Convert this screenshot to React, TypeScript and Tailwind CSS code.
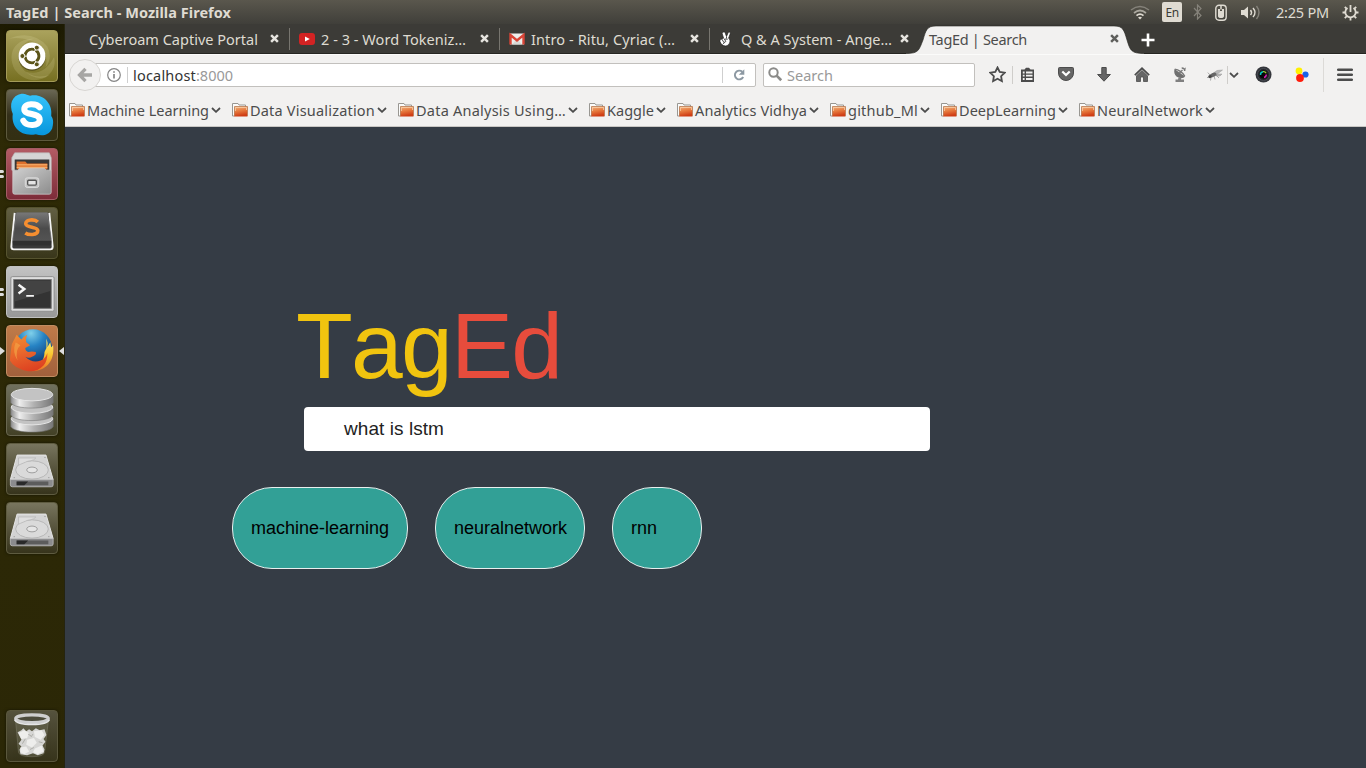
import { useLayoutEffect, useRef, useState, type ReactNode } from "react";

/* Text whose tracking is measured so that it fills `w` pixels. */
function Fit({ w, className = "", children }: { w: number; className?: string; children: string }) {
  const ref = useRef<HTMLSpanElement>(null);
  const [spacing, setSpacing] = useState(0);
  useLayoutEffect(() => {
    if (ref.current) {
      const natural = ref.current.getBoundingClientRect().width - spacing * children.length;
      setSpacing((w - natural) / children.length);
    }
  }, [w, children]);
  return (
    <span ref={ref} className={`inline-block shrink-0 whitespace-pre ${className}`} style={{ letterSpacing: `${spacing}px` }}>
      {children}
    </span>
  );
}

function Close({ dark = false }: { dark?: boolean }) {
  return (
    <svg width="9" height="9" viewBox="0 0 8 8" className="shrink-0">
      <path d="M1 1 7 7M7 1 1 7" stroke={dark ? "#5e5e5b" : "#e6e4df"} strokeWidth="2.2" />
    </svg>
  );
}

function Chevron() {
  return (
    <svg width="10" height="6" viewBox="0 0 10 6" className="shrink-0">
      <path d="M1 1 5 4.8 9 1" fill="none" stroke="#4c4c4c" strokeWidth="1.8" />
    </svg>
  );
}

function Folder() {
  return (
    <svg width="16" height="16" viewBox="0 0 16 16" className="shrink-0">
      <defs>
        <linearGradient id="folder" x1="0" y1="0" x2="0.25" y2="1">
          <stop offset="0" stopColor="#f3b683" />
          <stop offset="0.5" stopColor="#e77b3f" />
          <stop offset="1" stopColor="#cf3c14" />
        </linearGradient>
      </defs>
      <path d="M.5 14V1.5H6L7 3H13.5V5" fill="#fbfbfa" stroke="#999792" />
      <path d="M.5 14H2" stroke="#999792" />
      <path d="M2.5 4.5H15.5V14.5H2Z" fill="url(#folder)" />
      <path d="M2.5 14V4.5H15.5V14" fill="none" stroke="#b97b54" strokeWidth=".8" />
      <path d="M3.5 9V5.5H14.5V8" fill="none" stroke="#fbd5b1" strokeOpacity=".7" />
    </svg>
  );
}

function YouTube() {
  return (
    <svg width="16" height="16" viewBox="0 0 16 16">
      <rect y="2" width="16" height="12" rx="3" fill="#d32323" />
      <path d="M6 5.4 10.8 8 6 10.6Z" fill="#fff" />
    </svg>
  );
}

function Gmail() {
  return (
    <svg width="16" height="16" viewBox="0 0 16 16">
      <rect x="1" y="2.5" width="14" height="11" fill="#eeeeec" />
      <path d="M3 13.5 8 8 13 13.5Z" fill="#d9d9d6" />
      <path d="M1.5 13.5V4L8 9.5 14.5 4V13.5" fill="none" stroke="#d94436" strokeWidth="2.4" />
    </svg>
  );
}

function Victory() {
  return (
    <svg width="16" height="16" viewBox="0 0 16 16">
      <path
        d="M4 1.2C5.2.5 6.2 1.3 6.4 2.4L7.5 5.5 9 2C9.4.8 10.6.8 11.1 1.6 11.4 2.2 11.2 2.8 11 3.3L9.6 7.3C11 8.2 11.3 9.8 10.8 11.2 10.2 13.3 8.8 15 6.4 15 3.8 15 1.8 13 1 10.6.6 9.1 1.6 8.1 3 8.1L4.6 7.2 3.3 3C3 2.1 3.3 1.5 4 1.2Z"
        fill="#fff"
        stroke="#222"
        strokeWidth=".7"
      />
      <path d="M3 8.4 5 11.6 6.8 10.5 5.4 8 8.8 8.2M5 11.6 4.4 13M7.5 5.8V7.5" fill="none" stroke="#222" strokeWidth=".8" />
    </svg>
  );
}

const tabs: { text: string; w: number; icon?: ReactNode }[] = [
  { text: "Cyberoam Captive Portal", w: 169 },
  { text: "2 - 3 - Word Tokeniz…", w: 145, icon: <YouTube /> },
  { text: "Intro - Ritu, Cyriac (…", w: 144, icon: <Gmail /> },
  { text: "Q & A System - Ange…", w: 151, icon: <Victory /> },
];

function Tabs() {
  return (
    <div className="flex h-[30px] border-b border-[#262622] bg-[#3c3b37] pl-[15px] text-[#dfdbd2]">
      {tabs.map((t, i) => (
        <div key={t.text} className="flex h-full w-[210px] shrink-0 items-center">
          <div className="flex h-4 w-[190px] items-center gap-[6px] pl-[9px]">
            {t.icon}
            <Fit w={t.w}>{t.text}</Fit>
          </div>
          <Close />
          <div className="flex-1" />
          {i < 3 && <div className="h-[22px] w-px bg-[#77756f]" />}
        </div>
      ))}
      <div className="relative flex h-[30px] w-[221px] shrink-0 items-center pb-px text-[#4c4c4c]">
        <svg width="238" height="30" viewBox="0 0 238 30" className="absolute -left-[14px] top-0">
          <path d="M0 30V29.5C13 29.5 13 26 17 16 20 6 21 2 30 2H208C217 2 218 6 221 16 224 26 225 29.5 238 29.5V30Z" fill="#f2f1f0" />
          <path d="M0 29.5C13 29.5 13 26 17 16 20 6 21 2 30 2H208C217 2 218 6 221 16 224 26 225 29.5 238 29.5" fill="none" stroke="#262622" strokeWidth=".6" />
        </svg>
        <div className="relative flex items-center pl-[9px]">
          <div className="w-[181px]">
            <Fit w={98}>TagEd | Search</Fit>
          </div>
          <Close dark />
        </div>
      </div>
      <svg width="14" height="14" viewBox="0 0 14 14" className="mt-[9px]">
        <path d="M7 .5V13.5M.5 7H13.5" stroke="#fff" strokeWidth="2.6" />
      </svg>
    </div>
  );
}

function Slot({ w = "w-[38px]", children }: { w?: string; children: ReactNode }) {
  return <div className={`flex shrink-0 items-center justify-center ${w}`}>{children}</div>;
}

function Toolbar() {
  return (
    <div className="flex h-[40px] items-center border-t border-[#fbfbfa] pl-[4px] text-[#4c4c4c]">
      <div className="relative z-10 flex size-[32px] shrink-0 items-center justify-center rounded-full border border-[#d8d6d3] bg-[#f2f1f0]">
        <svg width="16" height="16" viewBox="0 0 16 16">
          <path d="M8.5 1.8 2.5 8 8.5 14.2M3 8H15" fill="none" stroke="#a7a6a4" strokeWidth="3.3" />
        </svg>
      </div>
      <div className="-ml-[8px] flex h-[24px] w-[663px] shrink-0 items-center rounded-[2px] border border-[#c2c0bd] bg-white pl-[13px]">
        <svg width="14" height="14" viewBox="0 0 14 14">
          <circle cx="7" cy="7" r="6.3" fill="none" stroke="#858585" strokeWidth="1.2" />
          <path d="M7 6V10.5M7 3.2V4.8" stroke="#858585" strokeWidth="1.7" />
        </svg>
        <div className="ml-[6px] mr-[5px] h-[16px] w-px bg-[#cfcfcf]" />
        <Fit w={63} className="text-[#333]">localhost</Fit>
        <Fit w={37} className="text-[#999]">:8000</Fit>
        <div className="flex-1" />
        <div className="h-[16px] w-px bg-[#cfcfcf]" />
        <svg width="12" height="12" viewBox="0 0 12 12" className="ml-[10px] mr-[10px]">
          <path d="M9.3 2.8A4.4 4.4 0 1 0 10.2 8" fill="none" stroke="#8c98a2" strokeWidth="1.9" />
          <path d="M11.3.3V5.8H5.8Z" fill="#8c98a2" />
        </svg>
      </div>
      <div className="ml-[7px] flex h-[24px] w-[212px] shrink-0 items-center rounded-[2px] border border-[#c2c0bd] bg-white pl-[4px] text-[#999]">
        <svg width="15" height="15" viewBox="0 0 15 15">
          <circle cx="5.5" cy="5.5" r="4.2" fill="none" stroke="#8b8b89" strokeWidth="2" />
          <path d="M8.6 8.6 13.2 13.2" stroke="#8b8b89" strokeWidth="2.7" />
        </svg>
        <Fit w={46} className="ml-[4px]">Search</Fit>
      </div>
      <Slot w="w-[44px]">
        <svg width="17" height="17" viewBox="0 0 17 17">
          <path d="M8.5 1.5 10.7 6 15.7 6.7 12.1 10.2 12.9 15.2 8.5 12.8 4.1 15.2 4.9 10.2 1.3 6.7 6.3 6Z" fill="none" stroke="#4c4c4c" strokeWidth="1.8" />
        </svg>
      </Slot>
      <div className="-ml-[7px] h-[18px] w-px bg-[#cfcdca]" />
      <Slot w="w-[30px]">
        <svg width="15" height="16" viewBox="0 0 15 16">
          <path d="M1 2.5H4.5L6 .8H9L10.5 2.5H14V15H1Z" fill="#4c4c4c" />
          <path d="M2.8 5.5H4.6M6 5.5H12.5M2.8 8.7H4.6M6 8.7H12.5M2.8 12H4.6M6 12H12.5" stroke="#f2f1f0" strokeWidth="1.8" />
        </svg>
      </Slot>
      <div className="-ml-[4px] flex">
        <Slot w="w-[54px]">
          <svg width="16" height="15" viewBox="0 0 16 15">
            <path d="M1.5.5H14.5Q15.5.5 15.5 1.5V6A7.5 7.5 0 0 1 .5 6V1.5Q.5.5 1.5.5Z" fill="#666" stroke="#4c4c4c" />
            <path d="M4.3 4.5 8 8 11.7 4.5" fill="none" stroke="#fff" strokeWidth="2.2" />
          </svg>
        </Slot>
        <Slot w="w-[22px]">
          <svg width="14" height="15" viewBox="0 0 14 15">
            <path d="M4.8.5H9.2V7.5H13.4L7 14.2.6 7.5H4.8Z" fill="#666" stroke="#4c4c4c" />
          </svg>
        </Slot>
        <Slot w="w-[54px]">
          <svg width="16" height="15" viewBox="0 0 16 15">
            <path d="M.8 8.2 8 1.3 15.2 8.2" fill="none" stroke="#4c4c4c" strokeWidth="1.7" />
            <path d="M2.5 8.7 8 3.5 13.5 8.7V14.5H9.5V10H6.5V14.5H2.5Z" fill="#666" stroke="#4c4c4c" strokeWidth=".8" />
          </svg>
        </Slot>
        <Slot w="w-[22px]">
          <svg width="14" height="16" viewBox="0 0 14 16">
            <path d="M1.5 2C.5 6.5 2.5 9.8 6.3 10.8 8.8 11.4 10.8 10.8 12 9.4Z" fill="#707070" />
            <path d="M1.8 2.2C5.5 2.5 10.5 6 11.8 9.3M6.3 6.2 9.5 3M8.7 1Q11.8 1 11.8 4" fill="none" stroke="#777" strokeWidth="1.3" />
            <path d="M11 1.2 13 .6 12.4 3Z" fill="#888" />
            <path d="M5.5 10.5 5 12.5H2.5V15H11V12.5H8L8.5 10.5" fill="#808080" />
          </svg>
        </Slot>
        <Slot w="w-[48px]">
          <svg width="16" height="12" viewBox="0 0 16 12">
            <path d="M5 5 10 1.5 15.5 1 9 6ZM9 5 15 5 13 7 9 7Z" fill="#b8b8b8" stroke="#999" strokeWidth=".5" />
            <ellipse cx="6" cy="6" rx="3.6" ry="2" transform="rotate(-25 6 6)" fill="#666" />
            <circle cx="3" cy="7.6" r="1.7" fill="#444" />
            <path d="M3 6 .8 3.6M4 8.5 3.5 11.5M7 7 8 10.5M9 6 12 9M0 8.5H2" fill="none" stroke="#888" strokeWidth=".7" />
          </svg>
        </Slot>
      </div>
      <div className="-ml-[12px] h-[18px] w-px bg-[#cfcdca]" />
      <Slot w="w-[13px]"><Chevron /></Slot>
      <Slot w="w-[47px]">
        <svg width="17" height="17" viewBox="0 0 17 17">
          <circle cx="8.5" cy="8.5" r="8" fill="#34363b" />
          <circle cx="8.5" cy="8.5" r="6" fill="#24252a" stroke="#494c53" />
          <circle cx="8.5" cy="8.5" r="4" fill="#080808" />
          <path d="M5.5 9A3 3 0 0 1 8 5.8" stroke="#00c9c0" strokeWidth="1.5" fill="none" />
          <path d="M8 5.6A3 3 0 0 1 11.2 7.3" stroke="#a5d236" strokeWidth="1.2" fill="none" />
          <path d="M11.3 8.5A3 3 0 0 1 9 11.4" stroke="#d921b5" strokeWidth="1.5" fill="none" />
        </svg>
      </Slot>
      <Slot w="w-[29px]">
        <svg width="14" height="15" viewBox="0 0 14 15">
          <circle cx="4" cy="4" r="3.4" fill="#fff000" />
          <circle cx="10.5" cy="7.5" r="3.1" fill="#1764e8" />
          <circle cx="5" cy="11" r="3.9" fill="#ff1c0c" />
        </svg>
      </Slot>
      <div className="ml-[7px] h-[34px] w-px bg-[#dcdad7]" />
      <Slot w="w-[42px]">
        <svg width="16" height="14" viewBox="0 0 16 14">
          <path d="M1.2 1.8H14.8M1.2 6.8H14.8M1.2 11.8H14.8" stroke="#4c4c4c" strokeWidth="2.5" strokeLinecap="round" />
        </svg>
      </Slot>
    </div>
  );
}

const bookmarks = [
  { text: "Machine Learning", w: 122, box: "w-[163px]" },
  { text: "Data Visualization", w: 125, box: "w-[166px]" },
  { text: "Data Analysis Using…", w: 150, box: "w-[191px]" },
  { text: "Kaggle", w: 47, box: "w-[88px]" },
  { text: "Analytics Vidhya", w: 112, box: "w-[153px]" },
  { text: "github_Ml", w: 70, box: "w-[111px]" },
  { text: "DeepLearning", w: 97, box: "w-[138px]" },
  { text: "NeuralNetwork", w: 106, box: "w-[148px]" },
];

function Bookmarks() {
  return (
    <div className="flex h-[33px] items-center border-b border-[#c9c7c4] pb-px pl-[4px] text-[#4c4c4c]">
      {bookmarks.map((b) => (
        <div key={b.text} className={`flex shrink-0 items-center gap-[2px] ${b.box}`}>
          <Folder />
          <Fit w={b.w}>{b.text}</Fit>
          <Chevron />
        </div>
      ))}
    </div>
  );
}

function Disk() {
  return (
    <svg viewBox="0 0 52 52" className="size-full">
      <path d="M10.5 11.5H40.5L48 37H3.5Z" fill="#d3d3d3" stroke="#e6e6e6" />
      <path d="M3.5 37H48V42.5Q48 44.5 46 44.5H5.5Q3.5 44.5 3.5 42.5Z" fill="#8b8b8d" stroke="#c4c4c4" strokeWidth=".8" />
      <path d="M10 39H43V43H10Z" fill="#5c5c5c" />
      <path d="M10 39H22L18 43H10Z" fill="#292929" />
      <ellipse cx="26" cy="27" rx="17" ry="9.5" fill="#dadada" stroke="#adadad" strokeWidth=".8" />
      <ellipse cx="26" cy="27" rx="5.5" ry="3" fill="#e5e5e5" stroke="#9b9b9b" />
      <path d="M12 14.5H30C28 18 22 17 19 19L12 22Z" fill="#dedede" stroke="#b7b7b7" strokeWidth=".8" />
      <path d="M7 35H8M43 35H44M39 14H40" stroke="#888" />
    </svg>
  );
}

const apps: { tile: string; art: ReactNode; pips?: boolean; active?: boolean }[] = [
  {
    tile: "from-[#aaa25c] to-[#777021] border-[#a49b58]",
    art: (
      <svg viewBox="0 0 52 52" className="size-full">
        <g fill="#f1edba" fillOpacity=".16">
          <path d="M2 8Q26-2 42 16 48 28 40 38 44 24 33 14 18 5 2 8Z" />
          <path d="M8 40C-1 23 9 7 28 8 14 12 9 23 14 36 20 47 34 50 45 45 31 56 16 51 8 40Z" />
          <path d="M19 42Q38 48 49 27 52 40 40 48 28 51 19 42Z" />
        </g>
        <circle cx="26" cy="27.3" r="14" fill="#413b12" opacity=".65" />
        <circle cx="26" cy="26" r="14" fill="#fff" />
        <circle cx="26" cy="26" r="7.2" fill="none" stroke="#5b5419" strokeWidth="3" strokeDasharray="14.1 1" strokeDashoffset="7.5" />
        {[[16, 26], [31, 17.3], [31, 34.7]].map(([x, y]) => (
          <circle key={y} cx={x} cy={y} r="2.6" fill="#5b5419" stroke="#fff" strokeWidth="1" />
        ))}
      </svg>
    ),
  },
  {
    tile: "from-[#6a6754] via-[#34301a] to-[#332f12] border-[#5d593d]",
    art: (
      <svg viewBox="0 0 52 52" className="size-full">
        <defs><linearGradient id="sky" x1="0" y1="0" x2="0" y2="1"><stop stopColor="#35c3fb" /><stop offset="1" stopColor="#0796dc" /></linearGradient></defs>
        <path d="M15 4C20 4 22 6 24 6 37 3 48 14 46 27 49 31 48 36 47 40 43 48 36 48 30 46 15 49 4 39 6 25 2 15 5 6 15 4Z" fill="url(#sky)" />
        <path d="M34 18C31 14 18 13 18 20 18 27 34 23 34 31 34 38 20 38 17 32" fill="none" stroke="#fff" strokeWidth="6.3" strokeLinecap="round" />
      </svg>
    ),
  },
  {
    tile: "from-[#b35b64] to-[#7d2c39] border-[#a35c65]",
    pips: true,
    art: (
      <svg viewBox="0 0 52 52" className="size-full">
        <defs><linearGradient id="cab" x1="0" y1="0" x2="1" y2="1"><stop stopColor="#d0d0d0" /><stop offset="1" stopColor="#8c8c8c" /></linearGradient></defs>
        <path d="M8 4H44L46 9V22H5V9Z" fill="#d5d5d5" stroke="#bbb" strokeWidth=".7" />
        <path d="M8 11H44V24H8Z" fill="#373737" />
        <path d="M10 13H19L21 15H42V21H10Z" fill="#de702c" />
        <path d="M10 16.5H42M10 19H42" stroke="#ffc27e" />
        <path d="M6 22H11L13 20H39L41 22H46V45Q46 47 44 47H8Q6 47 6 45Z" fill="url(#cab)" stroke="#d4d4d4" strokeWidth=".7" />
        <rect x="19" y="30" width="14" height="10" rx="2" fill="#c4c4c4" stroke="#ddd" />
        <rect x="21.5" y="32.5" width="9" height="5" rx="1" fill="#e4e4e4" stroke="#555" strokeWidth="1.4" />
      </svg>
    ),
  },
  {
    tile: "from-[#625f43] to-[#39361a] border-[#56532f]",
    art: (
      <svg viewBox="0 0 52 52" className="size-full">
        <defs><linearGradient id="key" x1="0" y1="0" x2="0" y2="1"><stop stopColor="#777" /><stop offset=".5" stopColor="#4b4b4b" /><stop offset="1" stopColor="#565656" /></linearGradient></defs>
        <path d="M8 5 4.5 40Q4.5 43 7 43H45Q47.5 43 47.5 40L44 5" fill="#3a3a3a" stroke="#f3f3f3" strokeWidth="2" />
        <path d="M10 5H42L46 32V36Q46 38 44 38H8Q6 38 6 36V32Z" fill="url(#key)" stroke="#777" strokeWidth=".7" />
        <path d="M6 34H46V38Q46 39 44 39H8Q6 39 6 38Z" fill="#303030" />
        <path d="M32 14.5C29 11.5 19 11.5 19.5 16.5 20 21 32 19 32 23.5 32 29 22 28 19 26" fill="none" stroke="#f58e30" strokeWidth="3.8" />
      </svg>
    ),
  },
  {
    tile: "from-[#c3c3c3] to-[#989898] border-[#c1c1c1]",
    pips: true,
    art: (
      <svg viewBox="0 0 52 52" className="size-full">
        <rect x="4" y="10" width="45" height="36" rx="1.5" fill="#dedede" stroke="#8d8d8d" />
        <rect x="7" y="13" width="39" height="30" fill="#333" stroke="#777" />
        <path d="M8 14H45V25L8 36Z" fill="#5c5c5c" opacity=".4" />
        <path d="M12 18.5 18 23 12 27.5" fill="none" stroke="#f4f4f4" strokeWidth="2.6" />
        <path d="M20 30H28" stroke="#f4f4f4" strokeWidth="2" />
      </svg>
    ),
  },
  {
    tile: "from-[#bf7b49] to-[#a2613c] border-[#c28d61]",
    active: true,
    art: (
      <svg viewBox="0 0 52 52" className="size-full">
        <defs>
          <radialGradient id="globe" cx=".45" cy=".1" r=".85"><stop stopColor="#7fd0ea" /><stop offset=".4" stopColor="#2683c4" /><stop offset="1" stopColor="#0f3068" /></radialGradient>
          <linearGradient id="fox" x1=".3" y1="0" x2=".6" y2="1"><stop stopColor="#f08a32" /><stop offset=".5" stopColor="#e8632b" /><stop offset="1" stopColor="#dc3f20" /></linearGradient>
          <linearGradient id="tail" x1="0" y1="0" x2="0" y2="1"><stop stopColor="#fff27a" /><stop offset=".5" stopColor="#f9c52f" /><stop offset="1" stopColor="#ea6e27" /></linearGradient>
        </defs>
        <circle cx="27" cy="23.5" r="20" fill="url(#globe)" />
        <path d="M41 13Q43 18 42 22L45 17 46 22 48 20C50 38 39 47 26 47 34 43 39 35 39 27L41 23Z" fill="url(#tail)" />
        <path d="M10 9 15 14Q17 11 21 9 19 13 20 17L24 20 19 23Q19 26 22 27 26 26 30 27 31 30 26 32 23 34 19 32 26 39 35 36 40 34 42 28 42 37 38 41 31 48 22 47 8 45 3 36 4 25 5 19 9 15Z" fill="url(#fox)" />
        <path d="M9 17Q5 27 11 36 8 25 14 20Z" fill="#f4a144" opacity=".7" />
      </svg>
    ),
  },
  {
    tile: "from-[#70705e] to-[#434126] border-[#696750]",
    art: (
      <svg viewBox="0 0 52 52" className="size-full">
        <defs><linearGradient id="drum"><stop stopColor="#8c8c8c" /><stop offset=".2" stopColor="#eee" /><stop offset=".55" stopColor="#b0b0b0" /><stop offset="1" stopColor="#777" /></linearGradient></defs>
        {[35, 23, 10].map((y) => (
          <g key={y}>
            <path d={`M4 ${y}V${y + 8}C6 ${y + 16} 46 ${y + 16} 48 ${y + 8}V${y}Z`} fill="url(#drum)" stroke="#777" strokeWidth=".6" />
            <ellipse cx="26" cy={y} rx="21.5" ry="6.5" fill="#c3c3c3" stroke="#e6e6e6" />
          </g>
        ))}
      </svg>
    ),
  },
  { tile: "from-[#78755e] to-[#37341c] border-[#5e5b40]", art: <Disk /> },
  { tile: "from-[#78755e] to-[#37341c] border-[#5e5b40]", art: <Disk /> },
];

function Tile({ tile, children }: { tile: string; children: ReactNode }) {
  return <div className={`size-[52px] shrink-0 overflow-hidden rounded-[4px] border bg-gradient-to-b shadow-[0_0_3px_#0008] ${tile}`}>{children}</div>;
}

function Launcher() {
  return (
    <div className="flex w-[65px] shrink-0 flex-col gap-[7px] border-r border-[#252410] bg-gradient-to-b from-[#1c1a02] via-[#2e2a06] via-10% to-[#2b2706] pb-[6px] pt-[6px]">
      {apps.map((a, i) => (
        <div key={i} className="flex items-center">
          <div className="flex w-[6px] flex-col gap-[2px]">
            {a.pips && <><div className="h-[3px] w-[4px] rounded-r bg-[#ddd]" /><div className="h-[3px] w-[4px] rounded-r bg-[#ddd]" /></>}
            {a.active && <svg width="5" height="8" viewBox="0 0 5 8"><path d="M0 0 5 4 0 8Z" fill="#ddd" /></svg>}
          </div>
          <Tile tile={a.tile}>{a.art}</Tile>
          {a.active && <svg width="5" height="8" viewBox="0 0 5 8" className="ml-px"><path d="M5 0 0 4 5 8Z" fill="#ddd" /></svg>}
        </div>
      ))}
      <div className="flex-1" />
      <div className="pl-[6px]">
        <Tile tile="from-[#55523d] to-[#37341b] border-[#5a573d]">
          <svg viewBox="0 0 52 52" className="size-full">
            <path d="M9 10H43L39 43Q38 47.5 26 47.5 13 47.5 12 43Z" fill="#77765f" opacity=".4" stroke="#999988" />
            <path d="M11 22 15 20 17 18 20 21 23 19 26 21 30 18 34 20 39 19 41 25 38 29 40 32 37 36 39 40 38 44 32 46 27 44 21 46 14 45 13 40 15 37 12 34 15 30Z" fill="#d6d6d4" />
            <g fill="#eeeeec">
              <path d="M12 23 18 20 23 23 21 28 15 29Z" />
              <path d="M28 21 36 20 39 25 35 30 29 27Z" />
              <path d="M21 30 28 28 31 33 26 38 20 35Z" />
              <path d="M14 38 20 37 23 42 18 45 14 43Z" />
              <path d="M29 39 36 36 38 42 32 45 27 43Z" />
            </g>
            <path d="M19 29 16 34M25 27 27 24M33 32 37 33M24 40 28 38M22 24 25 26" stroke="#adada8" />
            <ellipse cx="26" cy="8" rx="17" ry="4" fill="#4c4b3b" stroke="#cecece" strokeWidth="3.2" />
            <path d="M8 9Q10 14 26 14T44 9" fill="none" stroke="#e5e5e5" strokeWidth="1.5" />
          </svg>
        </Tile>
      </div>
    </div>
  );
}

function SystemBar() {
  return (
    <div className="flex h-[24px] shrink-0 items-center bg-gradient-to-b from-[#5a574d] to-[#403f3a] pl-[6px] text-[#dfdbd2]">
      <Fit w={225} className="-mt-px font-bold">TagEd | Search - Mozilla Firefox</Fit>
      <div className="flex-1" />
      <svg width="20" height="15" viewBox="0 0 20 15">
        <path d="M1 5Q10-2 19 5" fill="none" stroke="#85827a" strokeWidth="1.5" />
        <path d="M4 8Q10 3 16 8" fill="none" stroke="#aaa79e" strokeWidth="1.7" />
        <path d="M6.5 10.7Q10 7.5 13.5 10.7" fill="none" stroke="#dfdbd2" strokeWidth="1.7" />
        <path d="M8 12.5Q10 10.8 12 12.5L10 14.5Z" fill="#dfdbd2" />
      </svg>
      <div className="ml-[12px] flex h-[20px] w-[20px] items-center justify-center rounded-[2px] bg-[#dfdbd2] text-[12px] text-[#3c3b37]"><Fit w={13} className="pt-px">En</Fit></div>
      <svg width="9" height="16" viewBox="0 0 9 16" className="ml-[11px]">
        <path d="M1 4 8 11.5 4.5 15V1L8 4.5 1 12" fill="none" stroke="#85827a" strokeWidth="1.2" />
      </svg>
      <svg width="12" height="17" viewBox="0 0 12 17" className="ml-[13px]">
        <rect x=".8" y="1.2" width="10.4" height="15" rx="3.2" fill="none" stroke="#dfdbd2" strokeWidth="1.4" />
        <path d="M3 5H5V7H7V5H9V12Q9 14 6 14T3 12Z" fill="#dfdbd2" />
        <path d="M6 1V5.5" stroke="#dfdbd2" strokeWidth="1.5" />
      </svg>
      <svg width="20" height="15" viewBox="0 0 20 15" className="ml-[14px]">
        <path d="M0 5H3L7 1.5V13.5L3 10H0Z" fill="#dfdbd2" />
        <path d="M9.5 5Q11.5 7.5 9.5 10M12 3Q16 7.5 12 12" fill="none" stroke="#dfdbd2" strokeWidth="1.5" />
        <path d="M15.5 1Q20.5 7.5 15.5 14" fill="none" stroke="#85827a" strokeWidth="1.4" />
      </svg>
      <Fit w={53} className="-mt-px ml-[15px]">2:25 PM</Fit>
      <svg width="17" height="17" viewBox="0 0 17 17" className="ml-[13px] mr-[7px]">
        <path d="M5.5 4A5.2 5.2 0 1 0 11.5 4" fill="none" stroke="#dfdbd2" strokeWidth="1.8" />
        <path d="M8.5 1V8M.5 8.5H3.5M13.5 8.5H16.5M2.8 2.8 4.8 4.8M14.2 2.8 12.2 4.8M2.8 14.2 4.8 12.2M14.2 14.2 12.2 12.2M8.5 13.5V16.5" stroke="#dfdbd2" strokeWidth="1.8" />
      </svg>
    </div>
  );
}

const tags = [
  { text: "machine-learning", w: 138, box: "w-[176px]" },
  { text: "neuralnetwork", w: 113, box: "w-[150px]" },
  { text: "rnn", w: 26, box: "w-[90px]" },
];

export default function App() {
  return (
    <div className="flex h-[768px] w-[1366px] flex-col overflow-hidden bg-[#353c45] font-['Noto_Sans','Open_Sans',sans-serif] text-[14.5px] leading-[20px]">
      <SystemBar />
      <div className="flex min-h-0 flex-1">
        <Launcher />
        <div className="flex min-w-0 flex-1 flex-col bg-[#f2f1f0]">
          <Tabs />
          <Toolbar />
          <Bookmarks />
          <main className="flex-1 bg-[#353c45] pl-[167px] pt-[170px] font-['Liberation_Sans',Arial,sans-serif]">
            <h1 className="ml-[64px] flex h-[110px] items-center pb-[12px] text-[93px] leading-[100px] [font-kerning:none]">
              <Fit w={155} className="text-[#f1c40f]">Tag</Fit>
              <Fit w={110} className="text-[#e74c3c]">Ed</Fit>
            </h1>
            <div className="ml-[72px] flex h-[44px] w-[626px] items-center rounded-[4px] bg-white pl-[40px] text-[19px] text-[#222]">
              <Fit w={100}>what is lstm</Fit>
            </div>
            <div className="mt-[36px] flex gap-[27px] text-[18px] text-black">
              {tags.map((t) => (
                <div key={t.text} className={`flex h-[82px] items-center rounded-[40px] border border-[#e8efee] bg-[#32a096] pl-[18px] ${t.box}`}>
                  <Fit w={t.w}>{t.text}</Fit>
                </div>
              ))}
            </div>
          </main>
        </div>
      </div>
    </div>
  );
}
